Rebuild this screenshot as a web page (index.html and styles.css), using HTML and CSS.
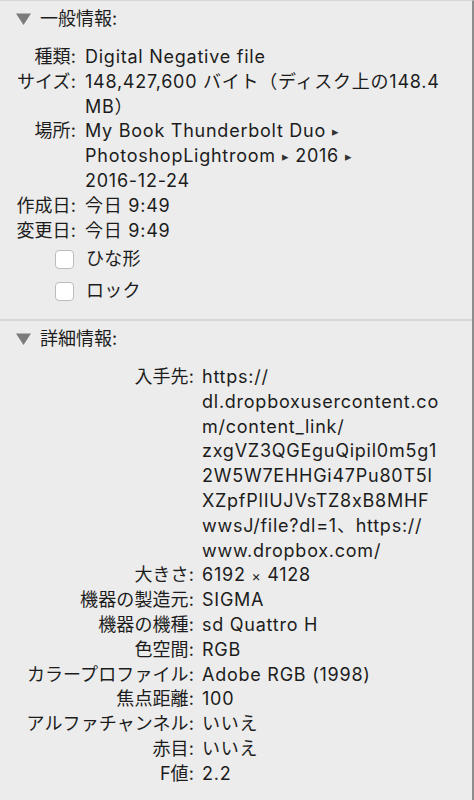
FILE: index.html
```html
<!DOCTYPE html>
<html lang="ja">
<head>
<meta charset="utf-8">
<title>情報</title>
<link rel="stylesheet" href="styles.css">
</head>
<body>
<div class="panel">
  <section class="section">
    <div class="sec-head">
      <svg class="disclosure" viewBox="0 0 15 12"><path d="M0 0.5H15L7.5 12Z"/></svg>
      <span class="sec-title">一般情報:</span>
    </div>
    <dl class="props props-general">
      <dt>種類:</dt><dd>Digital Negative file</dd>
      <dt>サイズ:</dt><dd>148,427,600 バイト（ディスク上の148.4<br>MB）</dd>
      <dt>場所:</dt><dd>My Book Thunderbolt Duo <span class="crumb">▸</span><br>PhotoshopLightroom <span class="crumb">▸</span> 2016 <span class="crumb">▸</span><br>2016-12-24</dd>
      <dt>作成日:</dt><dd>今日 9:49</dd>
      <dt>変更日:</dt><dd>今日 9:49</dd>
    </dl>
    <div class="checks">
      <label class="check"><span class="box"></span><span>ひな形</span></label>
      <label class="check"><span class="box"></span><span>ロック</span></label>
    </div>
  </section>
  <div class="separator"></div>
  <section class="section">
    <div class="sec-head">
      <svg class="disclosure" viewBox="0 0 15 12"><path d="M0 0.5H15L7.5 12Z"/></svg>
      <span class="sec-title">詳細情報:</span>
    </div>
    <dl class="props props-detail">
      <dt>入手先:</dt><dd>https://<br>dl.dropboxusercontent.co<br>m/content_link/<br>zxgVZ3QGEguQipil0m5g1<br>2W5W7EHHGi47Pu80T5l<br>XZpfPlIUJVsTZ8xB8MHF<br>wwsJ/file?dl=1、https://<br>www.dropbox.com/</dd>
      <dt>大きさ:</dt><dd>6192 <span class="times">×</span> 4128</dd>
      <dt>機器の製造元:</dt><dd>SIGMA</dd>
      <dt>機器の機種:</dt><dd>sd Quattro H</dd>
      <dt>色空間:</dt><dd>RGB</dd>
      <dt>カラープロファイル:</dt><dd>Adobe RGB (1998)</dd>
      <dt>焦点距離:</dt><dd>100</dd>
      <dt>アルファチャンネル:</dt><dd>いいえ</dd>
      <dt>赤目:</dt><dd>いいえ</dd>
      <dt>F値:</dt><dd>2.2</dd>
    </dl>
  </section>
</div>
</body>
</html>
```
FILE: styles.css
```css
html, body {
  margin: 0;
  padding: 0;
}
body {
  background: #ececec;
  font-family: Inter, "Noto Sans CJK JP", sans-serif;
  font-size: 18px;
  line-height: 24.8px;
  color: #1c1c1c;
}
.panel {
  width: 474px;
  height: 800px;
  box-sizing: border-box;
  border-top: 1px solid #d6d6d6;
  border-right: 2px solid #8d8d8d;
  overflow: hidden;
}
.sec-head {
  display: flex;
  align-items: center;
  height: 24.8px;
  padding: 5.6px 0 0 16px;
}
.disclosure {
  width: 15px;
  height: 12px;
  fill: #7b7b7b;
  margin-right: 9px;
  flex: none;
}
.props {
  display: grid;
  margin: 13.6px 0 0;
}
.props-general {
  grid-template-columns: 76px 1fr;
  column-gap: 9px;
}
.props-detail {
  grid-template-columns: 194px 1fr;
  column-gap: 8px;
  margin-top: 13.2px;
}
.props dt {
  text-align: right;
  white-space: nowrap;
  letter-spacing: 0.1px;
}
.props dd {
  margin: 0;
  white-space: nowrap;
  letter-spacing: 0.75px;
}
.crumb {
  font-size: 13px;
  line-height: 0;
  vertical-align: 1px;
  color: #333;
}
.times {
  font-size: 14px;
  line-height: 0;
}
.checks {
  display: flex;
  flex-direction: column;
  padding-left: 55px;
}
.check {
  display: flex;
  align-items: center;
  gap: 12px;
  height: 32px;
  letter-spacing: 0.3px;
}
.box {
  width: 19px;
  height: 19px;
  box-sizing: border-box;
  background: #fff;
  border: 1px solid #bcbcbc;
  border-radius: 4px;
}
.separator {
  height: 2px;
  margin-top: 12px;
  background: #d6d6d6;
}
```
